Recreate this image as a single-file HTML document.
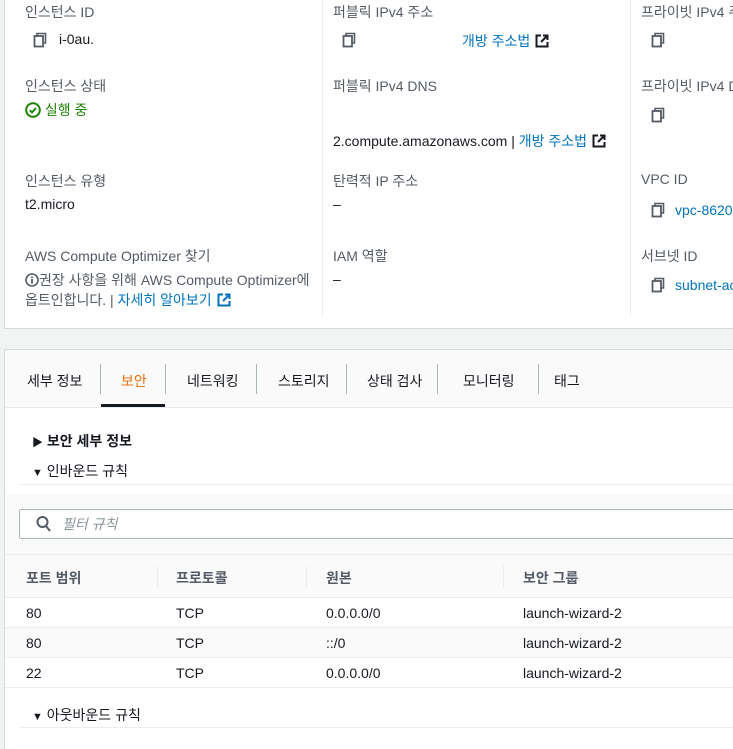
<!DOCTYPE html>
<html><head><meta charset="utf-8"><style>
*{box-sizing:border-box;margin:0;padding:0}
body{width:733px;height:736px;overflow:hidden;background:#f2f3f3;font-family:"Liberation Sans","Noto Sans CJK KR",sans-serif;font-size:14px;color:#16191f;position:relative}
.a{position:absolute;white-space:nowrap}
.lab{color:#545b64}
.lnk{color:#0073bb}
.p1{position:absolute;left:4px;top:-2px;width:740px;height:331px;background:#fff;border:1px solid #d5dbdb;border-top:none}
.vl{position:absolute;width:1px;background:#eaeded}
.p2{position:absolute;left:4px;top:349px;width:740px;height:400px;background:#fff;border-left:1px solid #d5dbdb;border-top:1px solid #d5dbdb}
.tabs{position:absolute;left:0;top:0;width:740px;height:58px;background:#fafafa;border-bottom:1px solid #eaeded}
.hl{position:absolute;height:1px;background:#eaeded}
.ext{vertical-align:-2px;margin-left:5px}
</style></head><body>
<svg width="0" height="0" style="position:absolute"><defs>
<symbol id="cp" viewBox="0 0 14 16"><path d="M4 4V1.5h8.5V11H10" fill="none" stroke="#545b64" stroke-width="1.6"/><rect x="1.5" y="4" width="8.5" height="10.5" fill="none" stroke="#545b64" stroke-width="1.8"/></symbol>
<symbol id="ex" viewBox="0 0 14 14"><path d="M6 1.5H1.5v11h11V8" fill="none" stroke="currentColor" stroke-width="2"/><path d="M8 1.5h4.5V6M12.5 1.5 6 8" fill="none" stroke="currentColor" stroke-width="2"/></symbol>
</defs></svg>
<div class="p1">
<div class="vl" style="left:317px;top:0;height:318px"></div>
<div class="vl" style="left:625px;top:0;height:318px"></div>
</div>
<div class="a lab" style="left:25px;top:2px">인스턴스 ID</div>
<svg class="a" style="left:33px;top:32px" width="14" height="16"><use href="#cp"/></svg>
<div class="a" style="left:59px;top:31px">i-0au.</div>
<div class="a lab" style="left:25px;top:76px">인스턴스 상태</div>
<div class="a" style="left:25px;top:100px;color:#1d8102"><svg width="16" height="16" viewBox="0 0 16 16" style="vertical-align:-3px"><circle cx="8" cy="8" r="6.8" fill="none" stroke="#1d8102" stroke-width="2"/><path d="M4.8 8.2l2.2 2.2 4-4.4" fill="none" stroke="#1d8102" stroke-width="2"/></svg> 실행 중</div>
<div class="a lab" style="left:25px;top:171px">인스턴스 유형</div>
<div class="a" style="left:25px;top:196px">t2.micro</div>
<div class="a lab" style="left:25px;top:246px">AWS Compute Optimizer 찾기</div>
<div class="a lab" style="left:25px;top:270px"><svg width="14" height="14" viewBox="0 0 14 14" style="vertical-align:-2px"><circle cx="7" cy="7" r="6" fill="none" stroke="#545b64" stroke-width="1.6"/><path d="M7 6v4.5M7 3.5v1.5" stroke="#545b64" stroke-width="1.8"/></svg>권장 사항을 위해 AWS Compute Optimizer에</div>
<div class="a lab" style="left:25px;top:290px">옵트인합니다. | <span class="lnk">자세히 알아보기</span><svg class="ext" width="14" height="14" style="color:#0073bb"><use href="#ex"/></svg></div>

<div class="a lab" style="left:333px;top:2px">퍼블릭 IPv4 주소</div>
<svg class="a" style="left:342px;top:32px" width="14" height="16"><use href="#cp"/></svg>
<div class="a lnk" style="left:462px;top:31px">개방 주소법<svg class="ext" width="14" height="14" style="color:#16191f"><use href="#ex"/></svg></div>
<div class="a lab" style="left:333px;top:76px">퍼블릭 IPv4 DNS</div>
<div class="a" style="left:333px;top:131px">2.compute.amazonaws.com | <span class="lnk">개방 주소법</span><svg class="ext" width="14" height="14" style="color:#16191f"><use href="#ex"/></svg></div>
<div class="a lab" style="left:333px;top:171px">탄력적 IP 주소</div>
<div class="a" style="left:333px;top:196px">–</div>
<div class="a lab" style="left:333px;top:246px">IAM 역할</div>
<div class="a" style="left:333px;top:271px">–</div>

<div class="a lab" style="left:641px;top:2px">프라이빗 IPv4 주</div>
<svg class="a" style="left:651px;top:32px" width="14" height="16"><use href="#cp"/></svg>
<div class="a lab" style="left:641px;top:76px">프라이빗 IPv4 D</div>
<svg class="a" style="left:651px;top:107px" width="14" height="16"><use href="#cp"/></svg>
<div class="a lab" style="left:641px;top:171px">VPC ID</div>
<svg class="a" style="left:651px;top:202px" width="14" height="16"><use href="#cp"/></svg>
<div class="a lnk" style="left:675px;top:202px">vpc-8620</div>
<div class="a lab" style="left:641px;top:246px">서브넷 ID</div>
<svg class="a" style="left:651px;top:277px" width="14" height="16"><use href="#cp"/></svg>
<div class="a lnk" style="left:675px;top:277px">subnet-ac</div>

<div class="p2">
<div class="tabs">
<div class="a" style="left:22px;top:21px">세부 정보</div>
<div class="a" style="left:116px;top:21px;color:#ec7211">보안</div>
<div style="position:absolute;left:96px;top:54px;width:64px;height:3px;background:#16191f"></div>
<div class="a" style="left:182px;top:21px">네트워킹</div>
<div class="a" style="left:273px;top:21px">스토리지</div>
<div class="a" style="left:362px;top:21px">상태 검사</div>
<div class="a" style="left:458px;top:21px">모니터링</div>
<div class="a" style="left:549px;top:21px">태그</div>
</div>
</div>
<div class="vl" style="left:100px;top:364px;height:30px;background:#aab7b8"></div>
<div class="vl" style="left:165px;top:364px;height:30px;background:#aab7b8"></div>
<div class="vl" style="left:256px;top:364px;height:30px;background:#aab7b8"></div>
<div class="vl" style="left:346px;top:364px;height:30px;background:#aab7b8"></div>
<div class="vl" style="left:437px;top:364px;height:30px;background:#aab7b8"></div>
<div class="vl" style="left:538px;top:364px;height:30px;background:#aab7b8"></div>
<div class="a" style="left:32px;top:431px;font-weight:bold"><span style="font-size:11px">▶</span> 보안 세부 정보</div>
<div class="a" style="left:32px;top:461px"><span style="font-size:11px">▼</span> 인바운드 규칙</div>
<div class="hl" style="left:19px;top:484px;width:714px"></div>
<div style="position:absolute;left:5px;top:495px;width:728px;height:59px;background:#fafafa"></div>
<div style="position:absolute;left:19px;top:509px;width:720px;height:30px;background:#fff;border:1px solid #aab7b8;border-radius:2px"></div>
<svg class="a" style="left:36px;top:515px" width="16" height="18" viewBox="0 0 16 18"><circle cx="6.5" cy="7" r="5" fill="none" stroke="#545b64" stroke-width="2"/><line x1="10" y1="11" x2="14" y2="16" stroke="#545b64" stroke-width="2"/></svg>
<div class="a" style="left:62px;top:514px;color:#879596;font-style:italic">필터 규칙</div>
<div class="hl" style="left:5px;top:554px;width:728px"></div>
<div style="position:absolute;left:5px;top:555px;width:728px;height:42px;background:#fafafa"></div>
<div class="vl" style="left:157px;top:566px;height:22px"></div>
<div class="vl" style="left:306px;top:566px;height:22px"></div>
<div class="vl" style="left:503px;top:566px;height:22px"></div>
<div class="a lab" style="left:26px;top:568px;font-weight:bold">포트 범위</div>
<div class="a lab" style="left:176px;top:568px;font-weight:bold">프로토콜</div>
<div class="a lab" style="left:326px;top:568px;font-weight:bold">원본</div>
<div class="a lab" style="left:523px;top:568px;font-weight:bold">보안 그룹</div>
<div class="hl" style="left:5px;top:597px;width:728px"></div>
<div style="position:absolute;left:5px;top:628px;width:728px;height:29px;background:#fafafa"></div>
<div class="hl" style="left:5px;top:627px;width:728px"></div>
<div class="hl" style="left:5px;top:657px;width:728px"></div>
<div class="hl" style="left:5px;top:687px;width:728px"></div>
<div class="a" style="left:26px;top:605px">80</div><div class="a" style="left:176px;top:605px">TCP</div><div class="a" style="left:326px;top:605px">0.0.0.0/0</div><div class="a" style="left:523px;top:605px">launch-wizard-2</div>
<div class="a" style="left:26px;top:635px">80</div><div class="a" style="left:176px;top:635px">TCP</div><div class="a" style="left:326px;top:635px">::/0</div><div class="a" style="left:523px;top:635px">launch-wizard-2</div>
<div class="a" style="left:26px;top:665px">22</div><div class="a" style="left:176px;top:665px">TCP</div><div class="a" style="left:326px;top:665px">0.0.0.0/0</div><div class="a" style="left:523px;top:665px">launch-wizard-2</div>
<div class="a" style="left:32px;top:705px"><span style="font-size:11px">▼</span> 아웃바운드 규칙</div>
<div class="hl" style="left:19px;top:727px;width:714px"></div>
</body></html>
